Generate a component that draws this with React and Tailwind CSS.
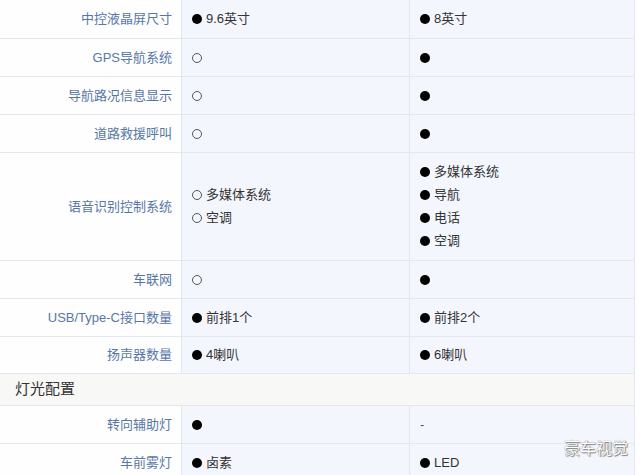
const rows = [
  { label: '中控液晶屏尺寸', a: [['full', '9.6英寸']], b: [['full', '8英寸']], h: 'h-[39px]' },
  { label: 'GPS导航系统', a: [['empty', '']], b: [['full', '']], h: 'h-[38px]' },
  { label: '导航路况信息显示', a: [['empty', '']], b: [['full', '']], h: 'h-[38px]' },
  { label: '道路救援呼叫', a: [['empty', '']], b: [['full', '']], h: 'h-[38px]' },
  {
    label: '语音识别控制系统',
    a: [['empty', '多媒体系统'], ['empty', '空调']],
    b: [['full', '多媒体系统'], ['full', '导航'], ['full', '电话'], ['full', '空调']],
    h: 'h-[108px]',
  },
  { label: '车联网', a: [['empty', '']], b: [['full', '']], h: 'h-[38px]' },
  { label: 'USB/Type-C接口数量', a: [['full', '前排1个']], b: [['full', '前排2个']], h: 'h-[38px]' },
  { label: '扬声器数量', a: [['full', '4喇叭']], b: [['full', '6喇叭']], h: 'h-[37px]' },
];

const lights = [
  { label: '转向辅助灯', a: [['full', '']], b: [['dash', '']], h: 'h-[38px]' },
  { label: '车前雾灯', a: [['full', '卤素']], b: [['full', 'LED']], h: 'h-[38px]' },
];

function Mark({ kind }) {
  if (kind === 'full') return <span className="inline-block w-[10px] h-[10px] rounded-full bg-black shrink-0" />;
  if (kind === 'empty') return <span className="inline-block w-[10px] h-[10px] rounded-full border border-[#555] shrink-0" />;
  return <span className="text-[#555]">-</span>;
}

function Cell({ items, first }) {
  return (
    <div className={`flex flex-col justify-center gap-[6px] pl-[10px] bg-[#f3f6fd] ${first ? 'border-r border-[#e2e7f0]' : ''}`}>
      {items.map(([kind, text], i) => (
        <div key={i} className="flex items-center gap-[4px] h-[17px] text-[13px] text-[#333]">
          <Mark kind={kind} />
          {text && <span>{text}</span>}
        </div>
      ))}
    </div>
  );
}

function Row({ r }) {
  return (
    <div className={`grid grid-cols-[182px_228px_224px] border-b border-[#e2e7f0] ${r.h}`}>
      <div className="flex items-center justify-end pr-[9px] bg-[#fefefe] border-r border-[#e2e7f0] text-[13px] text-[#5877a6]">
        {r.label}
      </div>
      <Cell items={r.a} first />
      <Cell items={r.b} />
    </div>
  );
}

export default function App() {
  return (
    <div
      className="relative w-[640px] h-[475px] overflow-hidden bg-white"
      style={{ fontFamily: '"Liberation Sans", "Noto Sans CJK SC", sans-serif' }}
    >
      <div className="w-[635px] border-r border-[#e2e7f0]">
        {rows.map((r) => (
          <Row key={r.label} r={r} />
        ))}
        <div className="h-[32px] flex items-center pl-[15px] bg-[#f8f8f7] border-b border-[#e6e6e6] text-[15px] text-[#333]">
          灯光配置
        </div>
        {lights.map((r) => (
          <Row key={r.label} r={r} />
        ))}
      </div>
      <div
        className="absolute left-[564px] top-[439px] whitespace-nowrap text-[16px] leading-[20px] text-white"
        style={{ textShadow: '0 0 1px #555, 1px 1px 1px #888' }}
      >
        豪车视觉
      </div>
    </div>
  );
}
